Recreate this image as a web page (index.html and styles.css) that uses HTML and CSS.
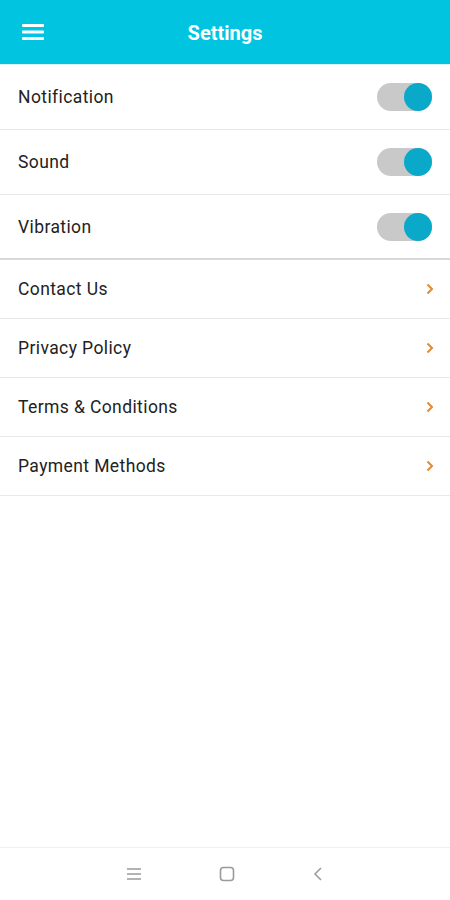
FILE: index.html
```html
<!DOCTYPE html>
<html>
<head>
<meta charset="utf-8">
<link rel="stylesheet" href="styles.css">
</head>
<body>
<div class="app">
  <header class="topbar">
    <svg class="menu" width="22" height="16" viewBox="0 0 22 16"><rect x="0" y="0" width="22" height="3" rx="1" fill="#fff"/><rect x="0" y="6.5" width="22" height="3" rx="1" fill="#fff"/><rect x="0" y="13" width="22" height="3" rx="1" fill="#fff"/></svg>
    <h1 class="title">Settings</h1>
  </header>
  <section class="toggles">
    <div class="row trow"><span class="label">Notification</span><span class="switch"><span class="knob"></span></span></div>
    <div class="row trow"><span class="label">Sound</span><span class="switch"><span class="knob"></span></span></div>
    <div class="row trow last"><span class="label">Vibration</span><span class="switch"><span class="knob"></span></span></div>
  </section>
  <section class="links">
    <div class="row lrow"><span class="label">Contact Us</span><svg class="chev" width="8" height="12" viewBox="0 0 8 12"><path d="M1.5 1.5 L6 6 L1.5 10.5" fill="none" stroke="#e3892f" stroke-width="2"/></svg></div>
    <div class="row lrow"><span class="label">Privacy Policy</span><svg class="chev" width="8" height="12" viewBox="0 0 8 12"><path d="M1.5 1.5 L6 6 L1.5 10.5" fill="none" stroke="#e3892f" stroke-width="2"/></svg></div>
    <div class="row lrow"><span class="label">Terms &amp; Conditions</span><svg class="chev" width="8" height="12" viewBox="0 0 8 12"><path d="M1.5 1.5 L6 6 L1.5 10.5" fill="none" stroke="#e3892f" stroke-width="2"/></svg></div>
    <div class="row lrow"><span class="label">Payment Methods</span><svg class="chev" width="8" height="12" viewBox="0 0 8 12"><path d="M1.5 1.5 L6 6 L1.5 10.5" fill="none" stroke="#e3892f" stroke-width="2"/></svg></div>
  </section>
  <div class="spacer"></div>
  <nav class="sysnav">
    <svg width="14" height="12" viewBox="0 0 14 12"><path d="M0 1 H14 M0 6 H14 M0 11 H14" stroke="#9a9a9a" stroke-width="1.5"/></svg>
    <svg width="16" height="16" viewBox="0 0 16 16"><rect x="1.5" y="1.5" width="13" height="13" rx="3" fill="none" stroke="#9a9a9a" stroke-width="1.6"/></svg>
    <svg width="10" height="16" viewBox="0 0 10 16"><path d="M8 2 L2 8 L8 14" fill="none" stroke="#9a9a9a" stroke-width="1.5"/></svg>
  </nav>
</div>
</body>
</html>
```
FILE: styles.css
```css
* { box-sizing: border-box; }
html, body { margin: 0; padding: 0; background: #fff; }
body { font-family: Roboto, "Noto Sans", sans-serif; }
.app { width: 450px; height: 900px; display: flex; flex-direction: column; }
.topbar {
  height: 65px; background: #00c4e0; display: flex; align-items: center;
  padding-left: 22px;
  border-bottom: 1px solid #d8f2f8;
}
.menu { display: block; }
.title {
  margin: 0; font-size: 20px; font-weight: 700; color: #fff;
  flex: 1; text-align: center; padding-right: 44px; margin-top: 2px;
}
.row {
  display: flex; align-items: center; justify-content: space-between;
  padding: 0 18px; border-bottom: 1px solid #e8e8e8;
}
.label { font-size: 17.5px; color: #222; letter-spacing: 0.4px; }
.trow { height: 65px; }
.trow.last { border-bottom: 2px solid #d9d9d9; }
.switch {
  width: 55px; height: 28px; background: #c9c9c9; border-radius: 14px;
  display: flex; justify-content: flex-end;
}
.knob {
  width: 28px; height: 28px; border-radius: 50%; background: #0aa9c9;
}
.lrow { height: 59px; padding-right: 16px; }
.chev { display: block; }
.spacer { flex: 1; }
.sysnav {
  height: 53px; border-top: 1px solid #efefef; display: flex;
  align-items: center; justify-content: center; gap: 78px;
}
.sysnav svg { display: block; }
```
